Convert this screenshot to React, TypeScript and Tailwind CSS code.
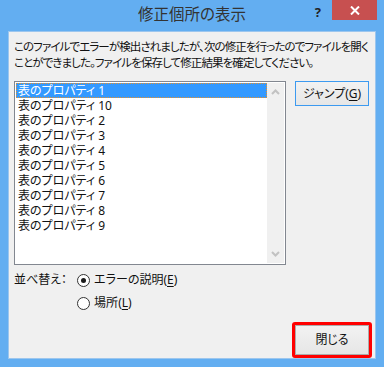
import React from 'react'

const font = "font-['Noto_Sans','Noto_Sans_CJK_JP',sans-serif] [font-feature-settings:'palt']"

const items = ['1', '10', '2', '3', '4', '5', '6', '7', '8', '9']

function Radio({ checked, label, hotkey }: { checked?: boolean; label: string; hotkey: string }) {
    return (
        <div className="flex items-center gap-[4px] h-[16px]">
            <div className="w-[13px] h-[13px] rounded-full border border-[#333] bg-white flex items-center justify-center">
                {checked && <div className="w-[5px] h-[5px] rounded-full bg-[#1a1a1a]" />}
            </div>
            <span className="text-[12px] leading-[16px] text-[#111]">
                {label}(<span className="underline underline-offset-2">{hotkey}</span>)
            </span>
        </div>
    )
}

export default function App() {
    return (
        <div className={`w-[384px] h-[367px] overflow-hidden bg-[#63aef1] flex flex-col px-[8px] pb-[8px] ${font}`}>
            {/* Title bar */}
            <div className="relative h-[31px] shrink-0 flex items-center justify-center">
                <span className="text-[15.5px] text-[#333] pb-[1px]">修正個所の表示</span>
                <span className="absolute right-[55px] top-[3px] text-[13px] font-bold text-[#222]">?</span>
                <div className="absolute right-[-1px] top-0 w-[45px] h-[20px] bg-[#c75050] flex items-center justify-center">
                    <svg width="10" height="9" viewBox="0 0 10 9">
                        <path d="M1 0.5 L9 8.5 M9 0.5 L1 8.5" stroke="white" strokeWidth="2" />
                    </svg>
                </div>
            </div>

            {/* Content */}
            <div className="flex-1 min-w-0 bg-[#f0f0f0] border border-[#9cc6ee] pl-[5px] pr-[6px] pt-[7px] flex flex-col">
                <p className="text-[11.5px] leading-[16px] text-[#111] whitespace-nowrap tracking-[-0.9px]">
                    このファイルでエラーが検出されましたが、次の修正を行ったのでファイルを開く
                    <br />
                    ことができました。ファイルを保存して修正結果を確定してください。
                </p>

                <div className="flex gap-[9px] mt-[10px]">
                    {/* List */}
                    <div className="w-[272px] h-[184px] border border-[#828790] bg-white flex p-[1px]">
                        <div className="flex-1 flex flex-col">
                            {items.map((n, i) => (
                                <div
                                    key={n}
                                    className={`h-[15px] pl-[2px] text-[12px] leading-[15px] whitespace-nowrap ${i === 0 ? 'bg-[#3399ff] text-white outline outline-1 outline-dotted outline-[#e8902a] -outline-offset-1' : 'text-[#111]'}`}
                                >
                                    表のプロパティ {n}
                                </div>
                            ))}
                        </div>
                        <div className="w-[17px] bg-[#f0f0f0] flex flex-col items-center justify-between py-[6px]">
                            <svg width="9" height="6" viewBox="0 0 9 6">
                                <path d="M1 5 L4.5 1.5 L8 5" stroke="#c2c2c2" strokeWidth="2" fill="none" />
                            </svg>
                            <svg width="9" height="6" viewBox="0 0 9 6">
                                <path d="M1 1 L4.5 4.5 L8 1" stroke="#c2c2c2" strokeWidth="2" fill="none" />
                            </svg>
                        </div>
                    </div>

                    {/* Jump button */}
                    <button className="w-[74px] h-[25px] border border-[#3c9af0] bg-gradient-to-b from-[#f2f2f2] to-[#e6e6e6] text-[12px] text-[#111] flex items-center justify-center">
                        ジャンプ(<span className="underline underline-offset-2">G</span>)
                    </button>
                </div>

                {/* Sort */}
                <div className="flex mt-[6px] gap-[10px]">
                    <span className="text-[12px] leading-[16px] text-[#111] pt-[1px]">並べ替え：</span>
                    <div className="flex flex-col gap-[7px] pt-[1px]">
                        <Radio checked label="エラーの説明" hotkey="E" />
                        <Radio label="場所" hotkey="L" />
                    </div>
                </div>

                {/* Close */}
                <div className="flex-1 flex items-end justify-end">
                    <div className="border-[3px] border-[#ff0000] rounded-[3px] mr-[-3px]">
                        <button className="w-[74px] h-[30px] border border-[#acacac] bg-gradient-to-b from-[#f2f2f2] to-[#e6e6e6] text-[12px] text-[#111] flex items-center justify-center">
                            閉じる
                        </button>
                    </div>
                </div>
            </div>
        </div>
    )
}
